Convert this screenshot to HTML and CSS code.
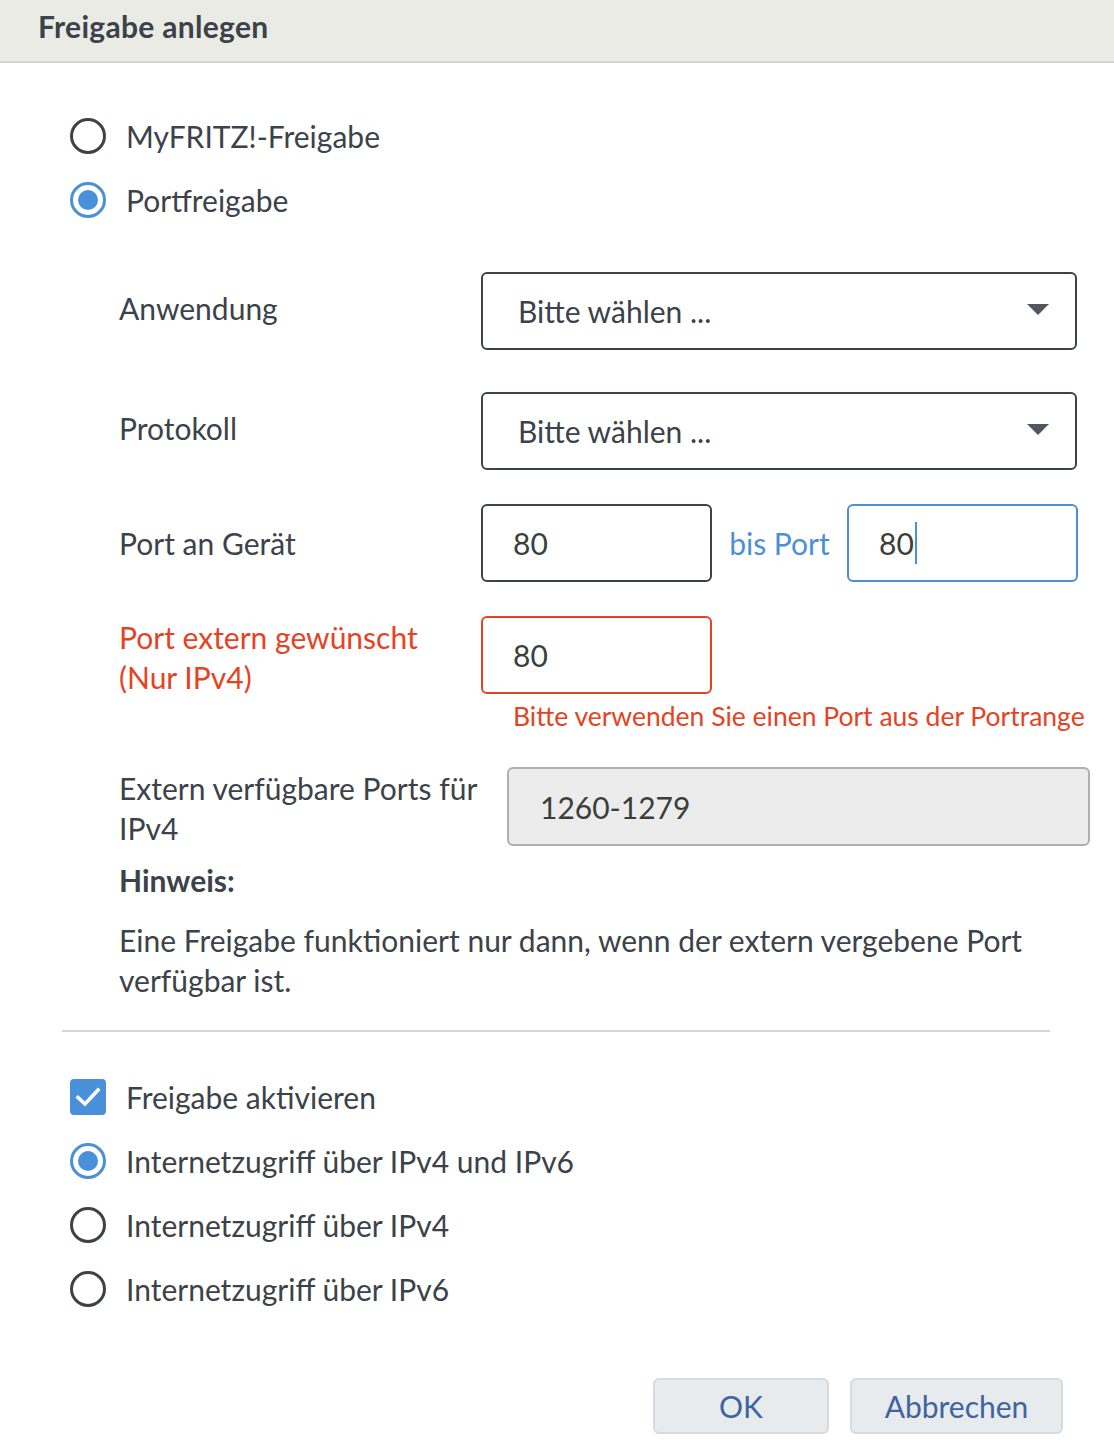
FILE: index.html
```html
<!DOCTYPE html>
<html lang="de">
<head>
<meta charset="utf-8">
<title>Freigabe anlegen</title>
<link rel="stylesheet" href="styles.css">
</head>
<body>
<div class="dialog">
  <header class="head"><h1 class="title">Freigabe anlegen</h1></header>

  <div class="choice-group top-choices">
    <div class="choice"><span class="radio"></span><span class="choice-label">MyFRITZ!-Freigabe</span></div>
    <div class="choice"><span class="radio checked"></span><span class="choice-label">Portfreigabe</span></div>
  </div>

  <div class="form">
    <div class="row row-app">
      <div class="label">Anwendung</div>
      <div class="select"><span>Bitte wählen ...</span><span class="caret-down"></span></div>
    </div>
    <div class="row row-proto">
      <div class="label">Protokoll</div>
      <div class="select"><span>Bitte wählen ...</span><span class="caret-down"></span></div>
    </div>
    <div class="row row-port">
      <div class="label">Port an Gerät</div>
      <div class="field">80</div>
      <div class="bis">bis Port</div>
      <div class="field focused">80<span class="cursor"></span></div>
    </div>
    <div class="row row-ext">
      <div class="label label-top error-text">Port extern gewünscht<br>(Nur IPv4)</div>
      <div class="ext-col">
        <div class="field invalid">80</div>
        <div class="error-msg">Bitte verwenden Sie einen Port aus der Portrange</div>
      </div>
    </div>
    <div class="row row-avail">
      <div class="label label-top label-wide">Extern verfügbare Ports für IPv4</div>
      <div class="readonly">1260-1279</div>
    </div>
    <div class="hint-title">Hinweis:</div>
    <p class="hint">Eine Freigabe funktioniert nur dann, wenn der extern vergebene Port verfügbar ist.</p>
  </div>

  <hr class="divider">

  <div class="choice-group bottom-choices">
    <div class="choice"><span class="checkbox"><svg viewBox="0 0 36 36" width="36" height="36"><path d="M8 18.5 L15 25 L28 11" fill="none" stroke="#fff" stroke-width="3.6" stroke-linecap="square"/></svg></span><span class="choice-label">Freigabe aktivieren</span></div>
    <div class="choice"><span class="radio checked"></span><span class="choice-label">Internetzugriff über IPv4 und IPv6</span></div>
    <div class="choice"><span class="radio"></span><span class="choice-label">Internetzugriff über IPv4</span></div>
    <div class="choice"><span class="radio"></span><span class="choice-label">Internetzugriff über IPv6</span></div>
  </div>

  <div class="buttons">
    <button class="btn btn-ok">OK</button>
    <button class="btn btn-cancel">Abbrechen</button>
  </div>
</div>
</body>
</html>
```
FILE: styles.css
```css
* { box-sizing: border-box; }
html, body { margin: 0; padding: 0; background: #fff; }
body {
  font-family: "Lato", "Liberation Sans", sans-serif;
  font-size: 30px;
  color: #3c4249;
  width: 1114px;
}
.head {
  height: 63px;
  background: #ebebe6;
  border-bottom: 2px solid #d4d4d2;
  padding-left: 38px;
  display: flex;
  align-items: center;
}
.title {
  margin: 0;
  font-size: 30px;
  font-weight: 700;
  color: #3c4249;
  letter-spacing: 0.3px;
  padding-bottom: 9px;
}
.choice-group { padding-left: 70px; }
.top-choices { margin-top: 41px; }
.choice {
  display: flex;
  align-items: center;
  height: 64px;
}
.choice-label { margin-left: 20px; }
.radio {
  width: 36px; height: 36px;
  border: 3px solid #3c4249;
  border-radius: 50%;
  flex: none;
  display: flex; align-items: center; justify-content: center;
}
.radio.checked { border-color: #4a90d9; }
.radio.checked::after {
  content: "";
  width: 20px; height: 20px;
  border-radius: 50%;
  background: #4a90d9;
}
.checkbox {
  width: 36px; height: 36px;
  background: #4a90d9;
  border-radius: 4px;
  flex: none;
  display: flex;
}
.form { padding-left: 119px; margin-top: 40px; }
.row { display: flex; }
.label { width: 362px; flex: none; }
.row-app { align-items: center; }
.row-app .label { margin-top: -6px; }
.row-proto { align-items: center; margin-top: 42px; }
.row-proto .label { margin-top: -6px; }
.row-port { align-items: center; margin-top: 34px; }
.row-ext { margin-top: 34px; }
.row-avail { margin-top: 36px; }
.label-top { line-height: 40px; margin-top: 1px; }
.label-wide { width: 388px; padding-right: 14px; }
.error-text { color: #e5431f; }
.select {
  width: 596px; height: 78px;
  border: 2px solid #3c4249;
  border-radius: 6px;
  display: flex; align-items: center; justify-content: space-between;
  padding: 0 26px 0 35px;
}
.caret-down {
  width: 0; height: 0;
  border-left: 11px solid transparent;
  border-right: 11px solid transparent;
  border-top: 11px solid #50575d;
  margin-top: -4px;
}
.field {
  width: 231px; height: 78px;
  border: 2px solid #3c4249;
  border-radius: 6px;
  display: flex; align-items: center;
  padding-left: 30px;
  color: #3a3f3c;
}
.field.focused { border-color: #4a90d9; }
.field.invalid { border-color: #e5431f; }
.cursor {
  display: inline-block;
  width: 2px; height: 42px;
  background: #4a90d9;
  margin-left: 1px;
}
.bis {
  color: #4a90d9;
  width: 135px;
  text-align: center;
  flex: none;
}
.error-msg {
  color: #e5431f;
  font-size: 26.5px;
  line-height: 30px;
  margin-left: 32px;
  margin-top: 7px;
  white-space: nowrap;
}
.readonly {
  width: 583px; height: 79px;
  background: #ebeceb;
  border: 2px solid #aeb0b0;
  border-radius: 6px;
  display: flex; align-items: center;
  padding-left: 31px;
  color: #3a3f3c;
}
.hint-title {
  font-weight: 700;
  line-height: 40px;
  margin-top: 12px;
}
.hint {
  margin: 20px 0 0;
  line-height: 40px;
  width: 930px;
}
.divider {
  border: 0;
  border-top: 2px solid #d6d6d6;
  margin: 30px 0 0 62px;
  width: 988px;
}
.bottom-choices { margin-top: 33px; }
.buttons {
  display: flex;
  justify-content: flex-end;
  gap: 21px;
  padding-right: 51px;
  margin-top: 57px;
}
.btn {
  font-family: inherit;
  font-size: 30px;
  color: #3e64a0;
  background: #e8ebee;
  border: 2px solid #d6dbe0;
  border-radius: 6px;
  height: 56px;
  padding: 0;
}
.btn-ok { width: 176px; }
.btn-cancel { width: 213px; }
```
